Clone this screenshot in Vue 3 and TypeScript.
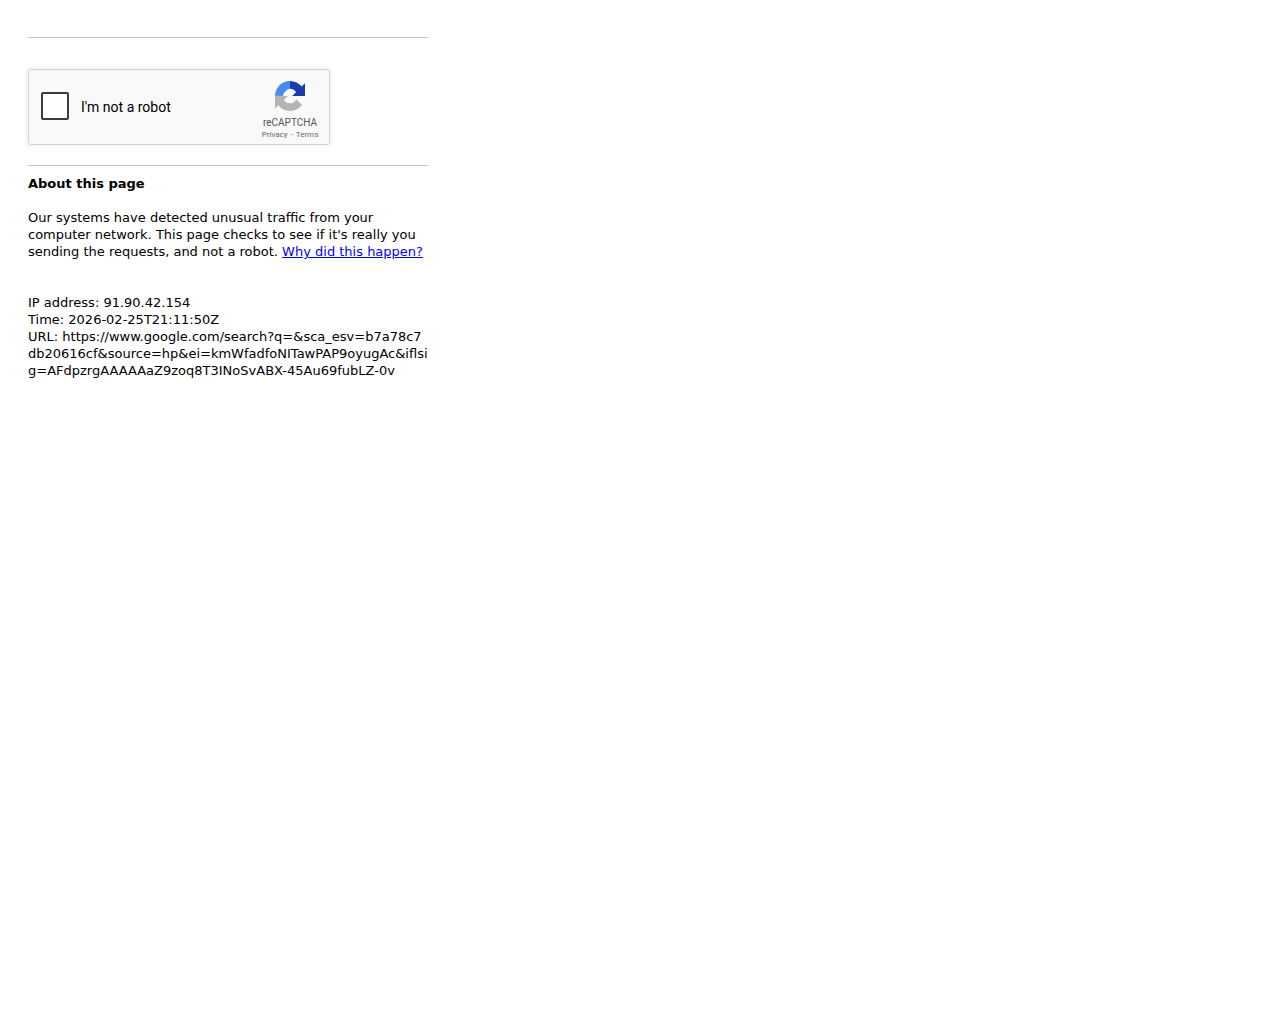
<script setup lang="ts">
const url = 'https://www.google.com/search?q=&sca_esv=b7a78c7db20616cf&source=hp&ei=kmWfadfoNITawPAP9oyugAc&iflsig=AFdpzrgAAAAAaZ9zoq8T3INoSvABX-45Au69fubLZ-0v'
</script>

<template>
  <div class="page">
    <hr class="rule" />
    <div class="captcha">
      <div class="check"></div>
      <div class="label">I'm not a robot</div>
      <div class="brand">
        <svg class="logo" viewBox="0 0 64 64" width="30" height="30" aria-hidden="true">
          <path fill="#1c3aa9" d="M64 32V4.700l-7.200 7.200C50.900 4.700 42 0 32 0l-2 8 2 8.500c5.500 0 10.200 2.800 13 7.100L36.700 32H64z" />
          <path fill="#4a8af0" d="M32 0C21.600 0 12.400 5 6.600 12.700 2.400 18.100 0 24.800 0 32h17c.3-3.300 1.500-5.600 5-9.500 2.400-3 5.800-6 10-6V0z" />
          <path fill="#b4b4b4" d="M0 31v28l7.200-7.200C13.100 59.300 22 64 32 64c10.400 0 19.600-5 25.400-12.700L45.700 39.500c-1.100 2.100-2.700 3.900-4.700 5.300-2.100 1.600-5 2.900-9 2.900-.5 0-.9-.1-1.100-.2-5-.4-9.300-3.100-11.800-7.100L27.300 32 0 31z" />
        </svg>
        <div class="name">reCAPTCHA</div>
        <div class="links"><span>Privacy</span><span class="dash">-</span><span>Terms</span></div>
      </div>
    </div>
    <hr class="rule second" />
    <div class="about">
      <b>About this page</b>
      <p class="intro">Our systems have detected unusual traffic from your computer network. This page checks to see if it's really you sending the requests, and not a robot. <a href="#">Why did this happen?</a></p>
      <div class="meta">
        <div>IP address: 91.90.42.154</div>
        <div>Time: 2026-02-25T21:11:50Z</div>
        <div class="url">URL: {{ url }}</div>
      </div>
    </div>
  </div>
</template>

<style>
html, body { margin: 0; background: #fff; }
</style>

<style scoped>
.page {
  width: 400px;
  padding: 37px 0 0 28px;
  font-family: "DejaVu Sans", sans-serif;
  font-size: 13px;
  line-height: 17px;
  color: #000;
}
.rule {
  margin: 0;
  border: 0;
  height: 1px;
  background: #c4c4c4;
}
.captcha {
  box-sizing: border-box;
  width: 302px;
  height: 76px;
  margin-top: 31px;
  display: flex;
  align-items: flex-start;
  background: #f9f9f9;
  border: 1px solid #d3d3d3;
  border-radius: 3px;
  box-shadow: 0 0 4px 1px rgba(0, 0, 0, 0.08);
  font-family: Roboto, "Liberation Sans", sans-serif;
  opacity: 0.999;
}
.check {
  box-sizing: border-box;
  width: 28px;
  height: 28px;
  margin: 22px 0 0 12px;
  background: #fff;
  border: 2px solid #3c3c3c;
  border-radius: 2px;
}
.label {
  margin: 28px 0 0 12px;
  font-size: 14px;
  line-height: 18px;
  color: #000;
  flex: 1;
}
.brand {
  width: 60px;
  margin: 11px 9px 0 0;
  display: flex;
  flex-direction: column;
  align-items: center;
  color: #555;
}
.logo { display: block; }
.name {
  margin-top: 5px;
  font-size: 10px;
  line-height: 14px;
  white-space: nowrap;
}
.links {
  font-size: 8px;
  line-height: 10px;
  white-space: nowrap;
  color: #666;
}
.dash { margin: 0 3px; }
.second { margin-top: 20px; }
.about { margin-top: 9px; }
.about b { display: block; }
.intro { margin: 17px 0 0; }
.intro a { color: #0000ee; }
.meta { margin-top: 34px; }
.url { word-break: break-all; }
</style>
